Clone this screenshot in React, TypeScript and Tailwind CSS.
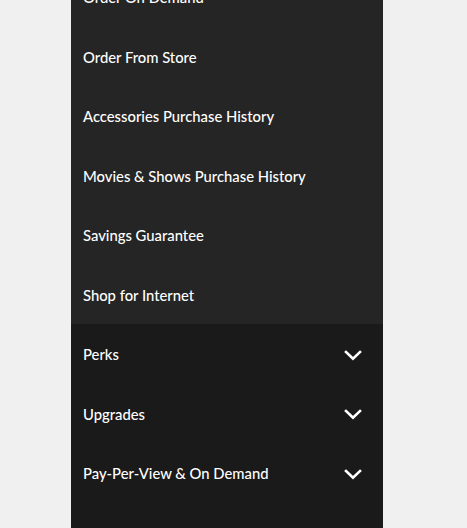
import React from "react";

const topItems = [
  "Order On Demand",
  "Order From Store",
  "Accessories Purchase History",
  "Movies & Shows Purchase History",
  "Savings Guarantee",
  "Shop for Internet",
];

const bottomItems = ["Perks", "Upgrades", "Pay-Per-View & On Demand"];

function Chevron() {
  return (
    <svg width="18" height="11" viewBox="0 0 18 11" fill="none" className="mt-[2px]">
      <path d="M2 2 L9 8.6 L16 2" stroke="#ffffff" strokeWidth="2.6" strokeLinecap="square" strokeLinejoin="miter" />
    </svg>
  );
}

export default function App() {
  return (
    <div className="min-h-screen h-[528px] overflow-hidden bg-[#f0f0f0]" style={{ fontFamily: "Lato, 'Open Sans', sans-serif" }}>
      <div className="ml-[71px] w-[312px] h-full overflow-hidden bg-[#1a1a1a]">
        <div className="mt-[-33px] bg-[#252525]">
          {topItems.map((t) => (
            <div key={t} className="h-[59.5px] flex items-center px-3 pt-[1px] text-[14.8px] font-medium text-white">
              {t}
            </div>
          ))}
        </div>
        <div className="bg-[#1a1a1a]">
          {bottomItems.map((t) => (
            <div key={t} className="h-[59.5px] flex items-center justify-between pl-3 pr-[21px] pt-[1px] text-[14.8px] font-medium text-white">
              <span>{t}</span>
              <Chevron />
            </div>
          ))}
        </div>
      </div>
    </div>
  );
}
